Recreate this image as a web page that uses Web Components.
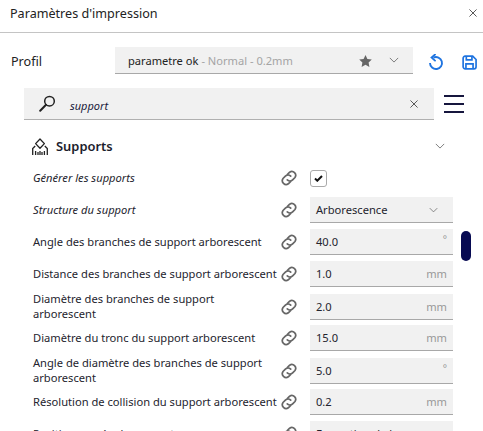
<!DOCTYPE html>
<html>
<head>
<meta charset="utf-8">
<style>
  html, body { margin: 0; padding: 0; background: #fff; overflow: hidden; }
  body { font-family: "Noto Sans", sans-serif; color: #1a1a2a; }
</style>
</head>
<body>
<print-panel>
  <panel-header slot="header" title="Paramètres d'impression"></panel-header>
  <profile-bar slot="profile"></profile-bar>
  <search-bar slot="search" value="support"></search-bar>
  <section-head slot="section" label="Supports"></section-head>

  <setting-row label="Générer les supports" italic type="check"></setting-row>
  <setting-row label="Structure du support" italic type="select" value="Arborescence"></setting-row>
  <setting-row label="Angle des branches de support arborescent" value="40.0" unit="°"></setting-row>
  <setting-row label="Distance des branches de support arborescent" value="1.0" unit="mm"></setting-row>
  <setting-row label="Diamètre des branches de support<br>arborescent" value="2.0" unit="mm"></setting-row>
  <setting-row label="Diamètre du tronc du support arborescent" value="15.0" unit="mm"></setting-row>
  <setting-row label="Angle de diamètre des branches de support<br>arborescent" value="5.0" unit="°"></setting-row>
  <setting-row label="Résolution de collision du support arborescent" value="0.2" unit="mm"></setting-row>
  <setting-row label="Position ancrée du support" type="select" value="Formation de base"></setting-row>
</print-panel>

<script>
const LINK_ICON = `<svg width="16" height="16" viewBox="0.5 0.5 15 15" fill="none" stroke="#666" stroke-width="1.6" stroke-linecap="round">
  <path d="M6.6 4.6 8.6 2.6a3.6 3.6 0 0 1 5 5l-2.2 2.2a3.6 3.6 0 0 1-5 0"/>
  <path d="M9.4 11.4 7.4 13.4a3.6 3.6 0 0 1-5-5l2.2-2.2a3.6 3.6 0 0 1 5 0"/>
</svg>`

const chevron = (w, color) => `<svg width="${w}" height="${Math.round(w / 2) + 1}" viewBox="0 0 12 7" fill="none" stroke="${color}" stroke-width="1"><path d="M1 1l5 5 5-5"/></svg>`

class PrintPanel extends HTMLElement {
  constructor () {
    super()
    this.shadow = this.attachShadow({ mode: 'open' })
    this.shadow.innerHTML = /*html*/`
      <style>
        :host { display: block; position: relative; width: 483px; height: 431px; overflow: hidden; }
        .rows { display: flex; flex-direction: column; gap: 6px; padding: 0 30px 0 33px; margin-top: 9px; }
        .scrollbar { position: absolute; left: 461px; top: 231px; width: 10px; height: 30px; border-radius: 5px; background: #070a52; }
      </style>
      <slot name="header"></slot>
      <slot name="profile"></slot>
      <slot name="search"></slot>
      <slot name="section"></slot>
      <div class="rows"><slot></slot></div>
      <div class="scrollbar"></div>
    `
  }
}

class PanelHeader extends HTMLElement {
  constructor () {
    super()
    this.shadow = this.attachShadow({ mode: 'open' })
    this.shadow.innerHTML = /*html*/`
      <style>
        :host { display: flex; align-items: center; justify-content: space-between; height: 26px; padding: 0 6px 6px 10px; border-bottom: 1px solid #c4c4c4; font-size: 12.6px; color: #222; }
        svg { display: block; }
      </style>
      <span>${this.getAttribute('title')}</span>
      <svg width="8" height="8" viewBox="0 0 9 9" stroke="#555" stroke-width="1.1" fill="none"><path d="M.5.5l8 8M8.5.5l-8 8"/></svg>
    `
  }
}

class ProfileBar extends HTMLElement {
  constructor () {
    super()
    this.shadow = this.attachShadow({ mode: 'open' })
    this.shadow.innerHTML = /*html*/`
      <style>
        :host { display: flex; align-items: center; height: 27px; margin-top: 14px; padding-left: 11px; font-size: 11.1px; }
        .label { width: 104px; margin-top: 1px; font-size: 12.6px; color: #222; }
        .box { width: 298px; height: 27px; box-sizing: border-box; display: flex; align-items: center; padding: 1px 14px 0 13px; background: #f1f1f1; border-bottom: 1px solid #a8a8a8; }
        .name { color: #222; }
        .sub { color: #a4a4a4; margin-left: 3px; flex: 1; }
        .star { margin-right: 17px; margin-left: -1px; }
        .chev { margin-top: -2px; }
        .tools { display: flex; align-items: center; gap: 18px; margin: 4px 0 0 15px; }
        svg { display: block; }
      </style>
      <span class="label">Profil</span>
      <div class="box">
        <span class="name">parametre ok</span>
        <span class="sub">- Normal - 0.2mm</span>
        <svg class="star" width="13" height="12" viewBox="0 0 13 12"><path fill="#666" d="M6.5 0l1.9 4 4.4.5-3.2 3 .8 4.4-3.9-2.2-3.9 2.2.8-4.4-3.2-3 4.4-.5z"/></svg>
        <span class="chev">${chevron(10, '#666')}</span>
      </div>
      <div class="tools">
        <svg width="16" height="17" viewBox="0 0 16 17" fill="none" stroke="#1f74e0" stroke-width="1.9"><path d="M5.4 3.6A6 6 0 1 1 2 9"/><path d="M7 .6 3.6 3.6 7 6.6" stroke-linecap="round"/></svg>
        <svg width="15" height="15" viewBox="0 0 16 16" fill="none" stroke="#1f74e0" stroke-width="1.8"><path d="M3.4 1.2h8L15 4.8v7.8a2.2 2.2 0 0 1-2.2 2.2H3.4a2.2 2.2 0 0 1-2.2-2.2V3.4a2.2 2.2 0 0 1 2.2-2.2z"/><path d="M4.6 1.5v3.6h6V1.5M4.2 14.6V9.4h7.6v5.2"/></svg>
      </div>
    `
  }
}

class SearchBar extends HTMLElement {
  constructor () {
    super()
    this.shadow = this.attachShadow({ mode: 'open' })
    this.shadow.innerHTML = /*html*/`
      <style>
        :host { display: flex; align-items: center; margin-top: 14px; padding-left: 24px; }
        .box { width: 410px; height: 32px; box-sizing: border-box; display: flex; align-items: center; padding: 0 16px 0 15px; background: #f1f1f1; border-bottom: 1px solid #b0b0b0; }
        .text { flex: 1; margin: 3px 0 0 14px; font-size: 11px; font-style: italic; color: #1a1a3a; }
        .menu { display: flex; flex-direction: column; gap: 6px; margin: -1px 0 0 10px; width: 20px; }
        .menu i { display: block; height: 2px; background: #16163e; }
        svg { display: block; }
      </style>
      <div class="box">
        <svg width="17" height="17" viewBox="0 0 17 17" fill="none" stroke="#222" stroke-width="1.5"><circle cx="10.5" cy="6.2" r="4.8"/><path d="M7 9.8 1.2 15.8" stroke-width="2" stroke-linecap="round"/></svg>
        <span class="text">${this.getAttribute('value')}</span>
        <svg width="8" height="8" viewBox="0 0 9 9" stroke="#555" stroke-width="1.1" fill="none"><path d="M.5.5l8 8M8.5.5l-8 8"/></svg>
      </div>
      <div class="menu"><i></i><i></i><i></i></div>
    `
  }
}

class SectionHead extends HTMLElement {
  constructor () {
    super()
    this.shadow = this.attachShadow({ mode: 'open' })
    this.shadow.innerHTML = /*html*/`
      <style>
        :host { display: flex; align-items: center; height: 20px; margin-top: 16px; padding: 0 38px 0 32px; font-size: 12.9px; font-weight: 600; color: #1c1c2c; }
        span { flex: 1; margin-left: 8px; }
        svg { display: block; }
      </style>
      <svg width="16" height="17" viewBox="0 0 16 17" fill="none" stroke="#222" stroke-width="1.3">
        <path d="M8 1 12.4 5.6 8 10.2 3.6 5.6z" stroke-linejoin="round"/>
        <path d="M3.2 8 .7 10.6V17M12.8 8l2.5 2.6V17"/>
        <path d="M3.6 13v4M6 14v3M8 13v4M10 14v3M12.4 13v4"/>
      </svg>
      <span>${this.getAttribute('label')}</span>
      ${chevron(10, '#666')}
    `
  }
}

class SettingRow extends HTMLElement {
  constructor () {
    super()
    this.shadow = this.attachShadow({ mode: 'open' })
  }

  connectedCallback () {
    this.render()
  }

  control () {
    const type = this.getAttribute('type')
    const value = this.getAttribute('value')
    const unit = this.getAttribute('unit')
    if (type === 'check') {
      return `<div class="check"><svg width="9" height="7" viewBox="0 0 9 7" fill="none" stroke="#111" stroke-width="2"><path d="M1 3.5 3.3 5.7 8 1"/></svg></div>`
    }
    if (type === 'select') {
      return `<div class="field select"><span>${value}</span>${chevron(9, '#666')}</div>`
    }
    return `<div class="field"><span>${value}</span><em class="${unit === '°' ? 'deg' : ''}">${unit}</em></div>`
  }

  render () {
    const italic = this.hasAttribute('italic')
    this.shadow.innerHTML = /*html*/`
      <style>
        :host { display: grid; grid-template-columns: 248px 16px 143px; column-gap: 0; align-items: center; height: 26px; font-size: 11.15px; color: #24242e; }
        .label { line-height: 15px; margin-top: -2px; white-space: nowrap; font-style: ${italic ? 'italic' : 'normal'}; }
        .link { display: flex; justify-content: center; }
        .field, .check { margin-left: 13px; }
        .field { width: 143px; height: 26px; box-sizing: border-box; display: flex; align-items: center; justify-content: space-between; padding: 0 6px 0 6px; background: #f1f1f1; border-bottom: 1px solid #a8a8a8; }
        .select { padding-right: 15px; }
        em { font-style: normal; color: #999; }
        em.deg { font-size: 10px; margin-top: -5px; }
        .check { width: 17px; height: 17px; box-sizing: border-box; display: flex; align-items: center; justify-content: center; background: #fff; border: 1px solid #aaa; border-radius: 3px; }
        svg { display: block; }
      </style>
      <span class="label">${this.getAttribute('label')}</span>
      <span class="link">${LINK_ICON}</span>
      ${this.control()}
    `
  }
}

customElements.define('print-panel', PrintPanel)
customElements.define('panel-header', PanelHeader)
customElements.define('profile-bar', ProfileBar)
customElements.define('search-bar', SearchBar)
customElements.define('section-head', SectionHead)
customElements.define('setting-row', SettingRow)
</script>
</body>
</html>
